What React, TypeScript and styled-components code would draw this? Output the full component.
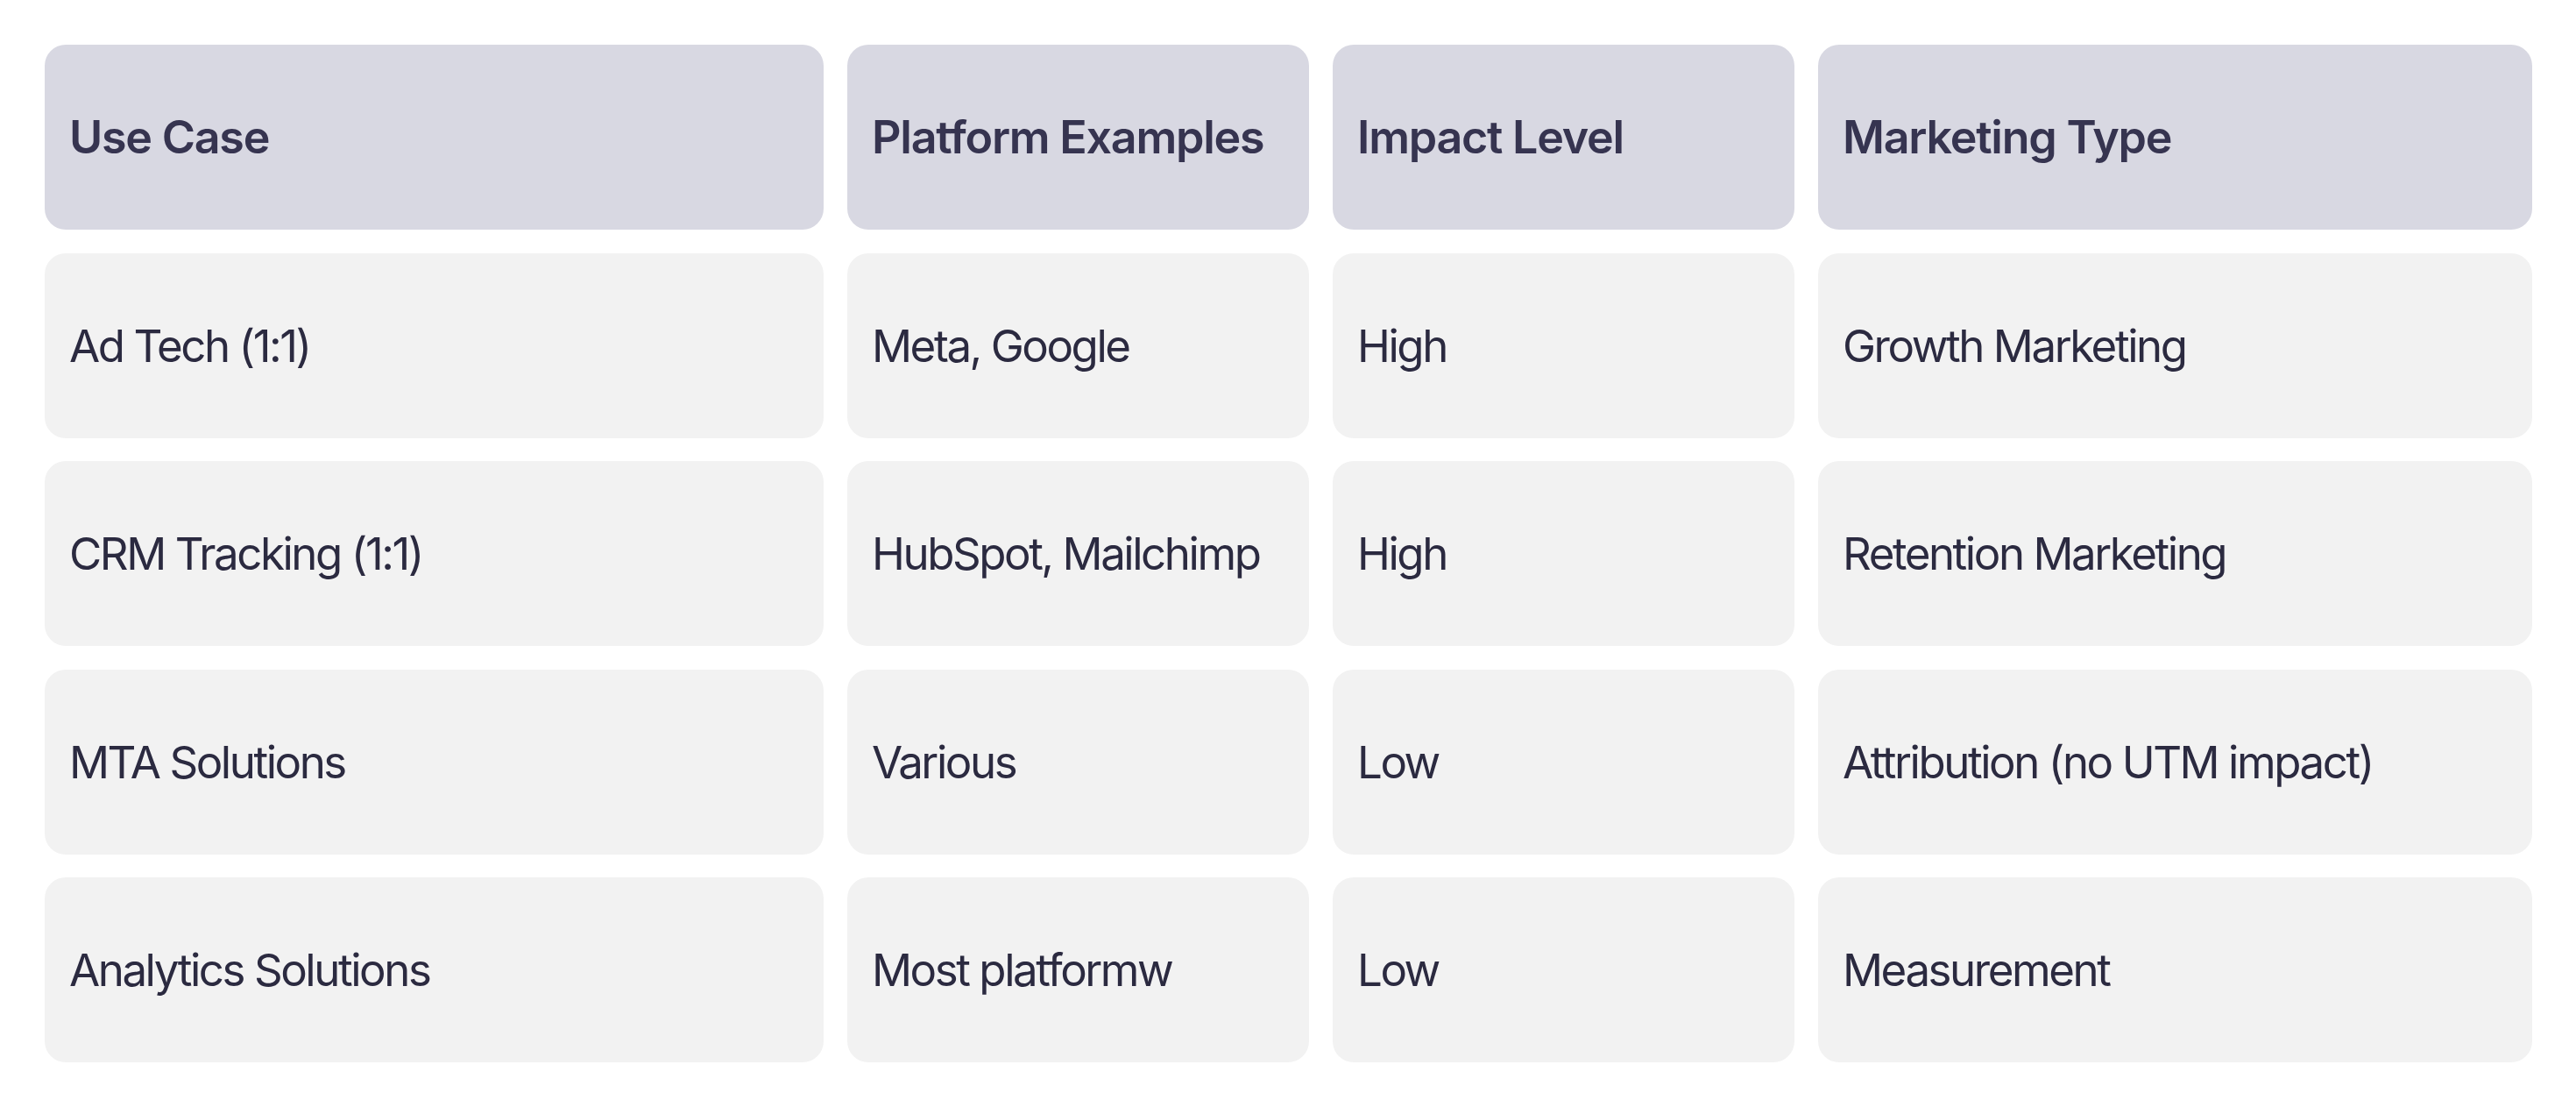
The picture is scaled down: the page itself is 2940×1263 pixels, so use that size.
import React from "react"
import styled, { createGlobalStyle } from "styled-components"

const GlobalStyle = createGlobalStyle`
  html, body {
    margin: 0;
    padding: 0;
    background: #ffffff;
  }
  body {
    font-family: Inter, "Noto Sans", sans-serif;
  }
`

const Page = styled.div`
  padding: 51px 50px 51px 51px;
`

const Table = styled.div`
  display: grid;
  grid-template-columns: 889px 527px 527px 815px;
  grid-auto-rows: 211px;
  column-gap: 27px;
  row-gap: 26.5px;
`

const Cell = styled.div<{ $head?: boolean }>`
  display: flex;
  align-items: center;
  padding: 0 28px;
  border-radius: 24px;
  background: ${p => (p.$head ? "#d8d8e2" : "#f2f2f2")};
  color: ${p => (p.$head ? "#363450" : "#2b2a40")};
  font-size: ${p => (p.$head ? "52px" : "51px")};
  font-weight: ${p => (p.$head ? 600 : 400)};
  letter-spacing: ${p => (p.$head ? "-0.024em" : "-0.048em")};
  white-space: nowrap;
`

const headers = ["Use Case", "Platform Examples", "Impact Level", "Marketing Type"]

const rows = [
  ["Ad Tech (1:1)", "Meta, Google", "High", "Growth Marketing"],
  ["CRM Tracking (1:1)", "HubSpot, Mailchimp", "High", "Retention Marketing"],
  ["MTA Solutions", "Various", "Low", "Attribution (no UTM impact)"],
  ["Analytics Solutions", "Most platformw", "Low", "Measurement"],
]

const App = () => {
  return (
    <Page>
      <GlobalStyle />
      <Table>
        {headers.map(h => (
          <Cell $head key={h}>
            {h}
          </Cell>
        ))}
        {rows.map(r =>
          r.map((c, i) => <Cell key={r[0] + i}>{c}</Cell>)
        )}
      </Table>
    </Page>
  )
}

export default App
